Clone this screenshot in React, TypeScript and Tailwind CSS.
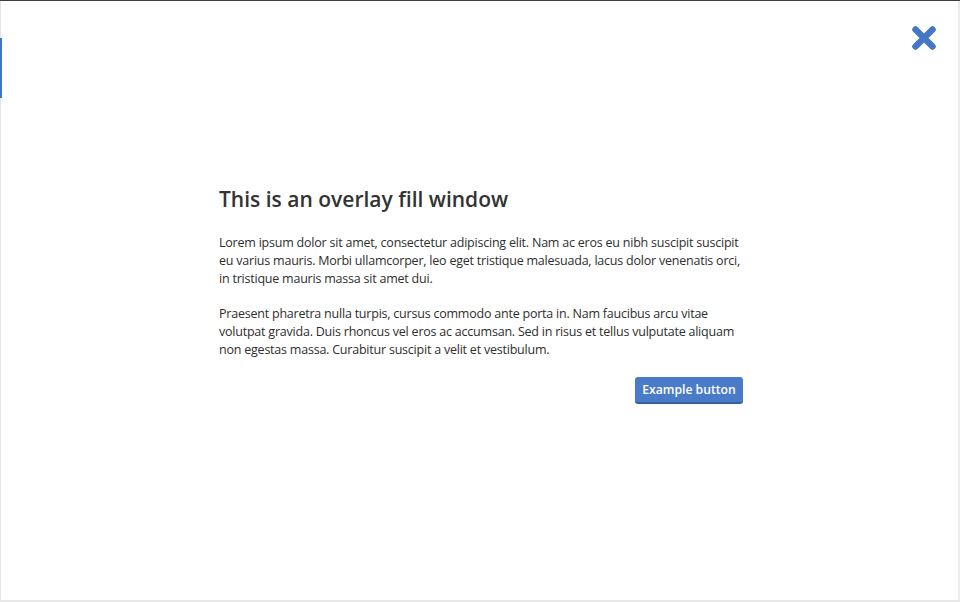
export default function App() {
  return (
    <div
      className="relative h-[602px] w-full overflow-hidden bg-white text-[#333]"
      style={{ fontFamily: '"Open Sans", "Liberation Sans", sans-serif' }}
    >
      {/* frame edges */}
      <div className="h-px w-full bg-[#3b3f48]" />
      <div className="absolute left-0 top-px bottom-0 w-[2px] border-l border-[#e3e3e3]" />
      <div className="absolute left-0 top-[38px] h-[60px] w-[2px] bg-[#3f74c9]" />
      <div className="absolute right-0 top-px bottom-0 w-[2px] bg-[#ececec]" />
      <div className="absolute bottom-0 left-0 h-[2px] w-full bg-[#e8e8e8]" />

      <button className="absolute right-[23px] top-[25px] flex h-[26px] w-[26px] items-center justify-center">
        <svg width="26" height="26" viewBox="0 0 26 26">
          <path
            d="M4.5 4.5 L21.5 21.5 M21.5 4.5 L4.5 21.5"
            stroke="#4677c6"
            strokeWidth="6.5"
            strokeLinecap="round"
          />
        </svg>
      </button>

      <div className="w-[524px] pt-[183px]" style={{ marginLeft: 219 }}>
        <h1 className="text-[21px] font-semibold leading-[30px] text-[#333]">
          This is an overlay fill window
        </h1>
        <p className="mt-[20px] text-[12.5px] leading-[18px] tracking-[-0.22px] text-[#2e2e2e]">
          Lorem ipsum dolor sit amet, consectetur adipiscing elit. Nam ac eros eu nibh suscipit suscipit
          eu varius mauris. Morbi ullamcorper, leo eget tristique malesuada, lacus dolor venenatis orci,
          in tristique mauris massa sit amet dui.
        </p>
        <p className="mt-[17px] text-[12.5px] leading-[18px] tracking-[-0.22px] text-[#2e2e2e]">
          Praesent pharetra nulla turpis, cursus commodo ante porta in. Nam faucibus arcu vitae
          volutpat gravida. Duis rhoncus vel eros ac accumsan. Sed in risus et tellus vulputate aliquam
          non egestas massa. Curabitur suscipit a velit et vestibulum.
        </p>
        <div className="mt-[18px] flex justify-end">
          <button className="h-[27px] w-[108px] rounded-[3px] border-b-2 border-[#35609f] bg-[#4a7bc8] text-[12.2px] font-semibold leading-[25px] text-white">
            Example button
          </button>
        </div>
      </div>
    </div>
  );
}
